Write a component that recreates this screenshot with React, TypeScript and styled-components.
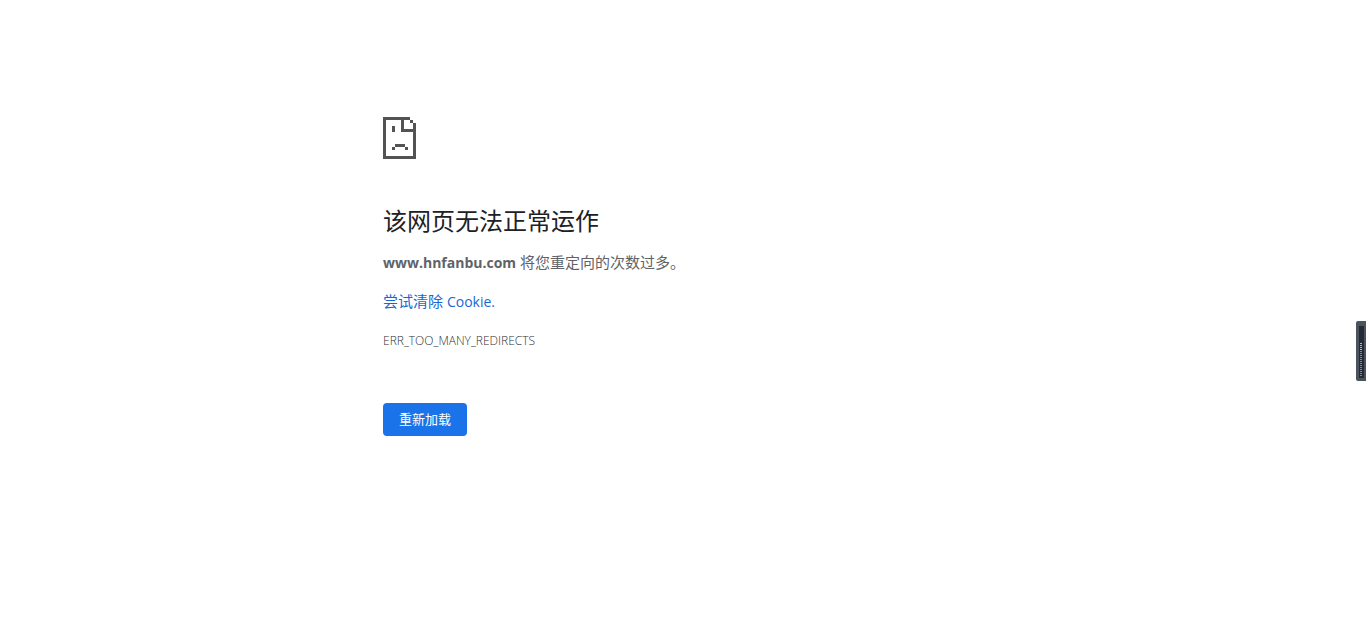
import React from "react";
import styled, { createGlobalStyle } from "styled-components";

const GlobalStyle = createGlobalStyle`
  body {
    margin: 0;
    background: #fff;
    color: #5f6368;
    font-family: "Open Sans", "Noto Sans CJK SC", sans-serif;
    font-size: 15px;
    line-height: 24px;
  }
`;

const Content = styled.main`
  box-sizing: border-box;
  max-width: 600px;
  margin: 0 auto;
  padding-top: 117px;
`;

const SadPage = styled.svg`
  display: block;
  width: 33px;
  height: 42px;
  fill: #535353;
`;

const Title = styled.h1`
  margin: 44px 0 11px;
  color: #202124;
  font-size: 24px;
  font-weight: 400;
  line-height: 36px;
`;

const Message = styled.p`
  margin: 0 0 14px;
`;

const Host = styled.strong`
  font-size: 14px;
  font-weight: 700;
`;

const HelpLink = styled.a`
  color: #1967d2;
  text-decoration: none;
`;

const Latin = styled.span`
  font-size: 14px;
`;

const ErrorCode = styled.p`
  margin: 0;
  color: #303236;
  font-size: 12px;
  font-weight: 300;
  line-height: 26px;
`;

const ReloadButton = styled.button`
  display: block;
  margin-top: 49px;
  padding: 0 16px;
  border: 0;
  border-radius: 4px;
  background: #1a73e8;
  color: #fff;
  font-family: inherit;
  font-size: 13px;
  line-height: 33px;
  cursor: pointer;
`;

const Meter = styled.aside`
  position: fixed;
  top: 321px;
  right: 0;
  width: 10px;
  height: 60px;

  svg {
    display: block;
  }
`;

const bars = Array.from({ length: 17 }, (_, i) => 22 + i * 2);

export default function App() {
  return (
    <>
      <GlobalStyle />
      <Content>
        <SadPage viewBox="0 0 33 42" shapeRendering="crispEdges" aria-hidden="true">
          <path d="M0 0H27V3H21V12H30V6H33V42H0ZM3 3V39H30V15H18V3Z" fillRule="evenodd" />
          <path d="M27 3h3v3h-3zM9 9h3v6H9zM12 27h10v3H12zM9 30h3v3H9zM22 30h3v3h-3z" />
        </SadPage>
        <Title>该网页无法正常运作</Title>
        <Message>
          <Host>www.hnfanbu.com</Host> 将您重定向的次数过多。
        </Message>
        <Message>
          <HelpLink href="#cookies">
            尝试清除 <Latin>Cookie.</Latin>
          </HelpLink>
        </Message>
        <ErrorCode>ERR_TOO_MANY_REDIRECTS</ErrorCode>
        <ReloadButton type="button">重新加载</ReloadButton>
      </Content>
      <Meter aria-hidden="true">
        <svg width="10" height="60" viewBox="0 0 10 60">
          <rect width="12" height="60" rx="2" fill="#4b535f" />
          <rect x="3" y="5" width="5" height="52" fill="#252b36" />
          {bars.map((y) => (
            <rect key={y} x="4" y={y} width="2" height="1" fill={y < 30 ? "#a9d046" : "#35a5cc"} />
          ))}
        </svg>
      </Meter>
    </>
  );
}
